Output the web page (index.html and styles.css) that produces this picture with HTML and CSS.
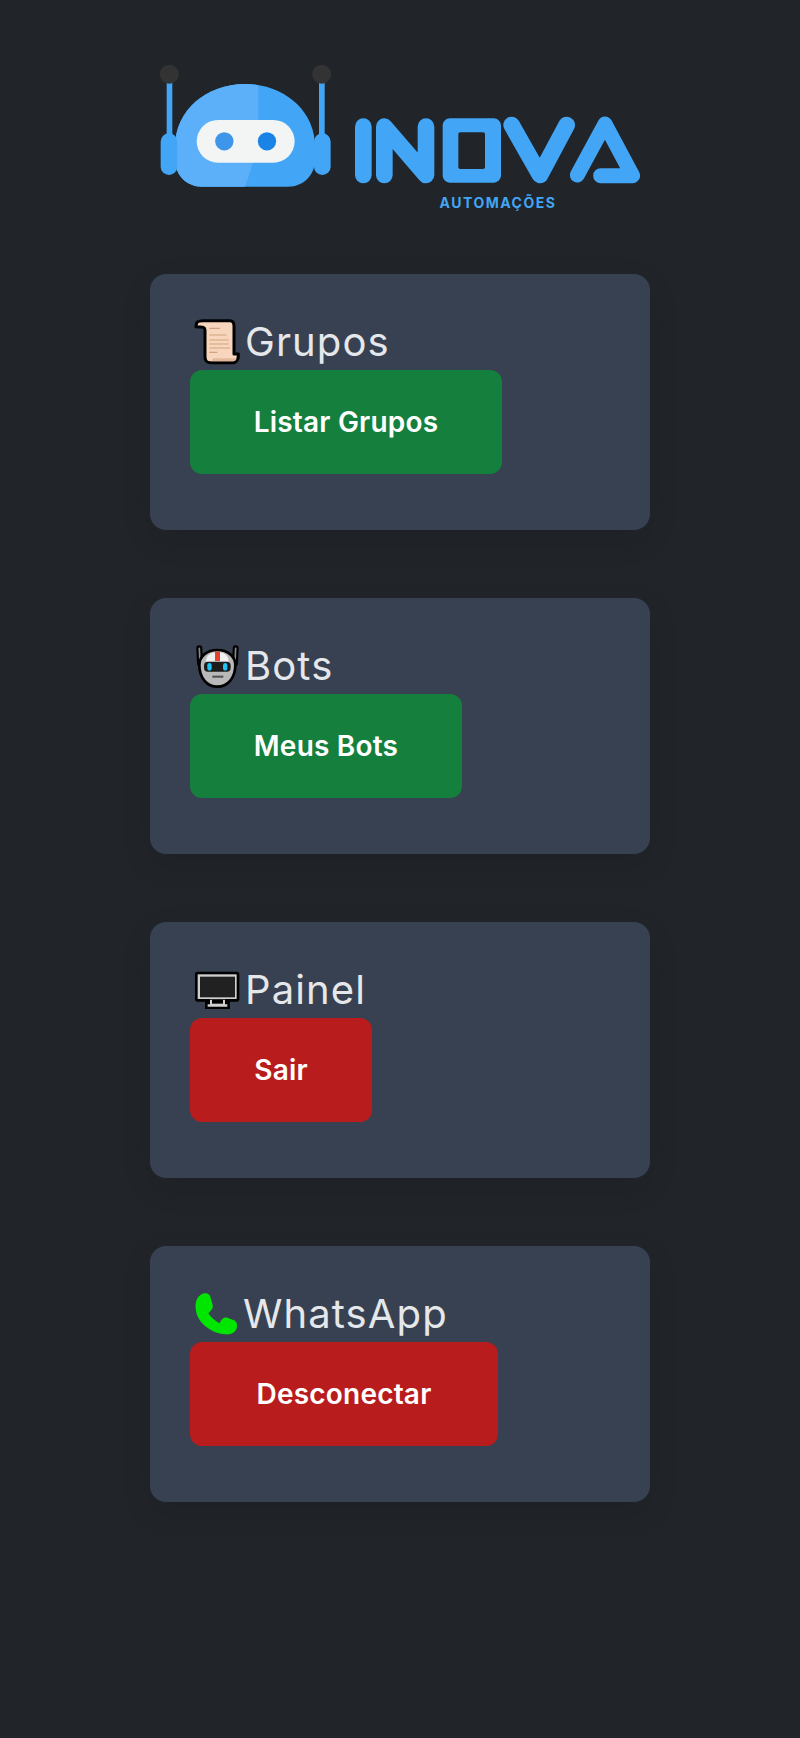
FILE: index.html
```html
<!DOCTYPE html>
<html lang="pt-BR">
<head>
<meta charset="utf-8">
<title>Inova Automações</title>
<link rel="stylesheet" href="styles.css">
</head>
<body>
<main class="page">
  <header class="logo">
    <svg class="logo-robot" width="200" height="170" viewBox="0 0 600 510">
      <rect x="80" y="95" width="17" height="160" fill="#42a5f5"/>
      <rect x="537" y="95" width="17" height="160" fill="#42a5f5"/>
      <circle cx="88" cy="73" r="28.500" fill="#333"/>
      <circle cx="545" cy="73" r="28.500" fill="#333"/>
      <path d="M105 290C105 180 200 102 315 102C430 102 525 180 525 290V330C525 375 490 410 445 410H185C140 410 105 375 105 330Z" fill="#42a5f5"/>
      <path d="M105 290C105 180 200 102 315 102C330 102 343 103 355 106V210C355 280 338 350 315 410H185C140 410 105 375 105 330Z" fill="#5bb0f9"/>
      <rect x="62" y="250" width="50" height="125" rx="25" fill="#42a5f5"/>
      <rect x="522" y="250" width="50" height="125" rx="25" fill="#42a5f5"/>
      <rect x="170" y="210" width="294" height="128" rx="64" fill="#f3f4f4"/>
      <circle cx="253" cy="274" r="27.500" fill="#3e96ea"/>
      <circle cx="381" cy="274" r="27.500" fill="#1a84e6"/>
    </svg>
    <div class="logo-word">
      <svg class="logo-inova" width="310" height="90" viewBox="0 0 930 270">
        <g fill="none" stroke="#42a5f5" stroke-width="50" stroke-linecap="round" stroke-linejoin="round">
          <path d="M70 80V225"/>
          <path d="M133 225V80L258 225V80"/>
          <path d="M515 75L600 225L680 75"/>
          <path d="M712 225L795 72L878 227H782" stroke-width="45"/>
        </g>
        <path d="M330 55H461C473 55 483 65 483 77V226C483 238 473 248 461 248H330C318 248 308 238 308 226V77C308 65 318 55 330 55ZM361 97C357 97 355 99 355 103V201C355 205 357 207 361 207H429C433 207 435 205 435 201V103C435 99 433 97 429 97Z" fill="#42a5f5" fill-rule="evenodd"/>
      </svg>
      <span class="logo-sub">AUTOMAÇÕES</span>
    </div>
  </header>

  <section class="card">
    <h2 class="card-title">
      <svg class="emoji" width="48" height="48" viewBox="39 24 144 144">
        <path d="M50 38C55 32 60 32 70 32H150C160 32 162 40 162 48V132H175C176 145 170 158 160 158H90C80 158 75 150 75 140V60C75 52 70 50 48 50Z" fill="#f8d5bd" stroke="#000" stroke-width="9" stroke-linejoin="round"/>
        <path d="M88 55H120M88 75H140M88 90H146M88 102H146M88 114H150M88 127H112" stroke="#cfa57f" stroke-width="3.500" fill="none"/>
        <path d="M100 145H170C168 152 165 154 160 154H92C96 152 98 149 100 145Z" fill="#e3b99d"/>
      </svg>
      <span>Grupos</span>
    </h2>
    <a class="btn btn-green btn-grupos" href="#">Listar Grupos</a>
  </section>

  <section class="card">
    <h2 class="card-title">
      <svg class="emoji" width="48" height="48" viewBox="39 36 144 144">
        <path d="M58 55L60 100M167 55L165 100" stroke="#000" stroke-width="18" stroke-linecap="round"/>
        <path d="M58 55L60 100M167 55L165 100" stroke="#8a8a8a" stroke-width="5" stroke-linecap="round"/>
        <path d="M58 105C58 78 82 60 112 60C142 60 166 78 166 105C166 145 142 170 112 170C82 170 58 145 58 105Z" fill="#b9b9b9" stroke="#000" stroke-width="8"/>
        <path d="M78 95C78 78 90 66 112 66C134 66 146 78 146 95Z" fill="#f0f0f0"/>
        <rect x="105" y="65" width="15" height="28" fill="#e2432a"/>
        <rect x="72" y="95" width="80" height="30" rx="12" fill="#1c1c1c"/>
        <rect x="82" y="99" width="13" height="23" rx="6.500" fill="#1fc3f4"/>
        <rect x="129" y="99" width="13" height="23" rx="6.500" fill="#1fc3f4"/>
        <rect x="97" y="137" width="33" height="6" fill="#4f4f4f"/>
      </svg>
      <span>Bots</span>
    </h2>
    <a class="btn btn-green btn-bots" href="#">Meus Bots</a>
  </section>

  <section class="card">
    <h2 class="card-title">
      <svg class="emoji" width="48" height="48" viewBox="39 33 144 144">
        <path d="M52 50H171C175 50 178 53 178 57V133C178 137 175 140 171 140H150V162H75V140H52C48 140 45 137 45 133V57C45 53 48 50 52 50Z" fill="#000"/>
        <rect x="53" y="58" width="117" height="74" fill="#cfcfcf"/>
        <rect x="60" y="65" width="105" height="62" fill="#212121"/>
        <path d="M90 134H135V148H142V155H83V148H90Z" fill="#cfcfcf"/>
        <rect x="96" y="134" width="33" height="12" fill="#000"/>
      </svg>
      <span>Painel</span>
    </h2>
    <a class="btn btn-red btn-sair" href="#">Sair</a>
  </section>

  <section class="card">
    <h2 class="card-title">
      <svg class="emoji" width="46" height="48" viewBox="39 30 138 144">
        <path d="M47 85C45 60 55 45 72 40C82 38 88 42 91 50L98 75C100 85 95 90 85 100C95 115 105 122 118 130C125 118 130 110 142 113L160 120C170 124 173 132 170 145C165 160 150 165 135 163C95 160 50 130 47 85Z" fill="#00e600"/>
      </svg>
      <span>WhatsApp</span>
    </h2>
    <a class="btn btn-red btn-desc" href="#">Desconectar</a>
  </section>
</main>
</body>
</html>
```

FILE: styles.css
```css
* { box-sizing: border-box; }
html, body { margin: 0; padding: 0; }
body {
  background: #212529;
  font-family: "Inter", "Noto Sans", "Liberation Sans", sans-serif;
  min-height: 1738px;
}
.page {
  width: 500px;
  margin: 0 auto;
  padding-top: 50px;
}
.logo {
  display: flex;
  align-items: flex-start;
  height: 224px;
  margin-left: -10px;
}
.logo-word {
  display: flex;
  flex-direction: column;
  align-items: center;
  margin-top: 50px;
}
.logo-sub {
  color: #42a5f5;
  font-size: 14px;
  font-weight: 700;
  line-height: 16px;
  margin: 5px 0 0 6px;
  letter-spacing: 1.5px;
}
.card {
  background: #374151;
  border-radius: 16px;
  padding: 40px;
  height: 256px;
  margin-bottom: 68px;
  box-shadow: 0 10px 30px rgba(0, 0, 0, 0.1);
}
.card-title {
  display: flex;
  align-items: center;
  height: 56px;
  margin: 0;
  color: #e5e7eb;
  font-size: 40px;
  font-weight: 400;
  line-height: 56px;
  letter-spacing: 1.1px;
}
.emoji { flex: none; margin: 0 4px 0 3px; }
.btn {
  display: flex;
  align-items: center;
  justify-content: center;
  height: 104px;
  border-radius: 12px;
  color: #fff;
  font-size: 28px;
  font-weight: 600;
  letter-spacing: 0.2px;
  text-decoration: none;
}
.btn-green { background: #15803d; }
.btn-red { background: #b91c1c; }
.btn-grupos { width: 312px; }
.btn-bots { width: 272px; }
.btn-sair { width: 182px; }
.btn-desc { width: 308px; }
```
